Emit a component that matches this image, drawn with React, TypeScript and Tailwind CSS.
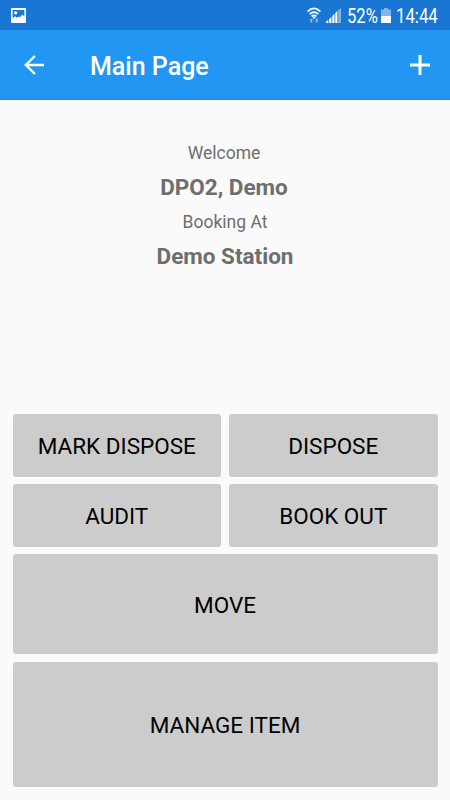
import React from "react";

function StatusBar() {
  return (
    <div className="flex h-[30px] items-center bg-[#1976d2] pl-[11px] pr-3 text-white">
      <svg className="mt-px h-[15px] w-[15px]" viewBox="0 0 15 15">
        <path fillRule="evenodd" fill="white" d="M1 0h13q1 0 1 1v13q0 1-1 1H1q-1 0-1-1V1q0-1 1-1ZM1.6 2v8.3L4 8.3l1.7 1.5L8 8.4l1 .8L11.3 6.5l2.1 2V2Z" />
        <circle cx="4.6" cy="4.8" r="1.6" fill="white" />
      </svg>
      <svg className="ml-auto h-[17px] w-[14px]" viewBox="0 0 14 17" fill="none" stroke="white" strokeWidth="1.6">
        <path d="M0.6 4.6Q7-1.8 13.4 4.6M2.6 7.2Q7 2.9 11.4 7.2M4.6 9.4Q7 7.2 9.4 9.4" />
        <circle cx="7" cy="10.6" r="1.2" fill="white" stroke="none" />
        <path d="M2.3 13.5 4.3 11.2l2 2.3H5.2v2.3H3.4v-2.3ZM7.7 13.5 9.7 15.8l2-2.3h-1.1v-2.3H8.8v2.3Z" fill="#84b5e8" stroke="none" />
      </svg>
      <svg className="ml-[5px] h-[15px] w-[15px]" viewBox="0 0 15 15" fill="white">
        <path d="M0 15v-1.5L2.3 12v3ZM3.2 15v-4L5.4 9v6ZM6.3 15V8l2.2-2.2V15ZM9.3 15V5l2.1-2.1V15Z" />
        <path d="M12.2 15V2.2L15 0v15Z" opacity=".45" />
      </svg>
      <span className="ml-[6px] w-[31px] pt-[3px] text-[19.5px] leading-none"><span className="inline-block origin-left scale-x-[.85]">52%</span></span>
      <svg className="ml-[3px] mt-px h-[15px] w-[10px]" viewBox="0 0 10 15">
        <path d="M3 0h4v1.5h3V8H0V1.5h3z" fill="#84b5e8" />
        <path d="M0 8h10v7H0z" fill="white" />
      </svg>
      <span className="ml-[5px] w-[42px] pt-[3px] text-[19.5px] leading-none"><span className="inline-block origin-left scale-x-[.86]">14:44</span></span>
    </div>
  );
}

const buttonClass = "flex items-center justify-center rounded-[3px] bg-[#cccccc] pt-[4px] text-[22.5px] font-normal text-black";

export default function App() {
  return (
    <div className="flex h-[800px] w-[450px] flex-col overflow-hidden bg-[#fafafa] font-[Roboto,sans-serif]">
      <StatusBar />
      <header className="flex h-[70px] items-center border-b border-[#1e88e5] bg-[#2196f3] pl-[24px] pr-[20px] text-white">
        <svg className="h-5 w-5" viewBox="0 0 20 20" fill="none" stroke="white" strokeWidth="2.4">
          <path d="M20 10H2M10.9 1 1.8 10l9.1 9" />
        </svg>
        <h1 className="ml-[46px] pt-[5px] text-[25px] font-medium">Main Page</h1>
        <svg className="ml-auto mt-px h-5 w-5" viewBox="0 0 20 20" stroke="white" strokeWidth="3">
          <path d="M10 0v20M0 10h20" />
        </svg>
      </header>
      <main className="flex flex-1 flex-col pb-[13.5px]">
        <section className="flex flex-col items-center pt-[38px] text-[#6e6e6e]">
          <p className="h-[30px] pr-[2px] text-[17.5px] leading-[30px]">Welcome</p>
          <p className="h-[39px] pr-[2px] text-[22.5px] font-bold leading-[39px]">DPO2, Demo</p>
          <p className="h-[30px] text-[17.5px] leading-[30px]">Booking At</p>
          <p className="h-[39px] text-[22.5px] font-bold leading-[39px]">Demo Station</p>
        </section>
        <section className="mt-auto grid grid-cols-2 grid-rows-[62.5px_62.5px_100px_125px] gap-x-2 gap-y-[7.5px] px-[12.5px]">
          <button className={buttonClass}>MARK DISPOSE</button>
          <button className={buttonClass}>DISPOSE</button>
          <button className={buttonClass}>AUDIT</button>
          <button className={buttonClass}>BOOK OUT</button>
          <button className={`${buttonClass} col-span-2`}>MOVE</button>
          <button className={`${buttonClass} col-span-2`}>MANAGE ITEM</button>
        </section>
      </main>
    </div>
  );
}
